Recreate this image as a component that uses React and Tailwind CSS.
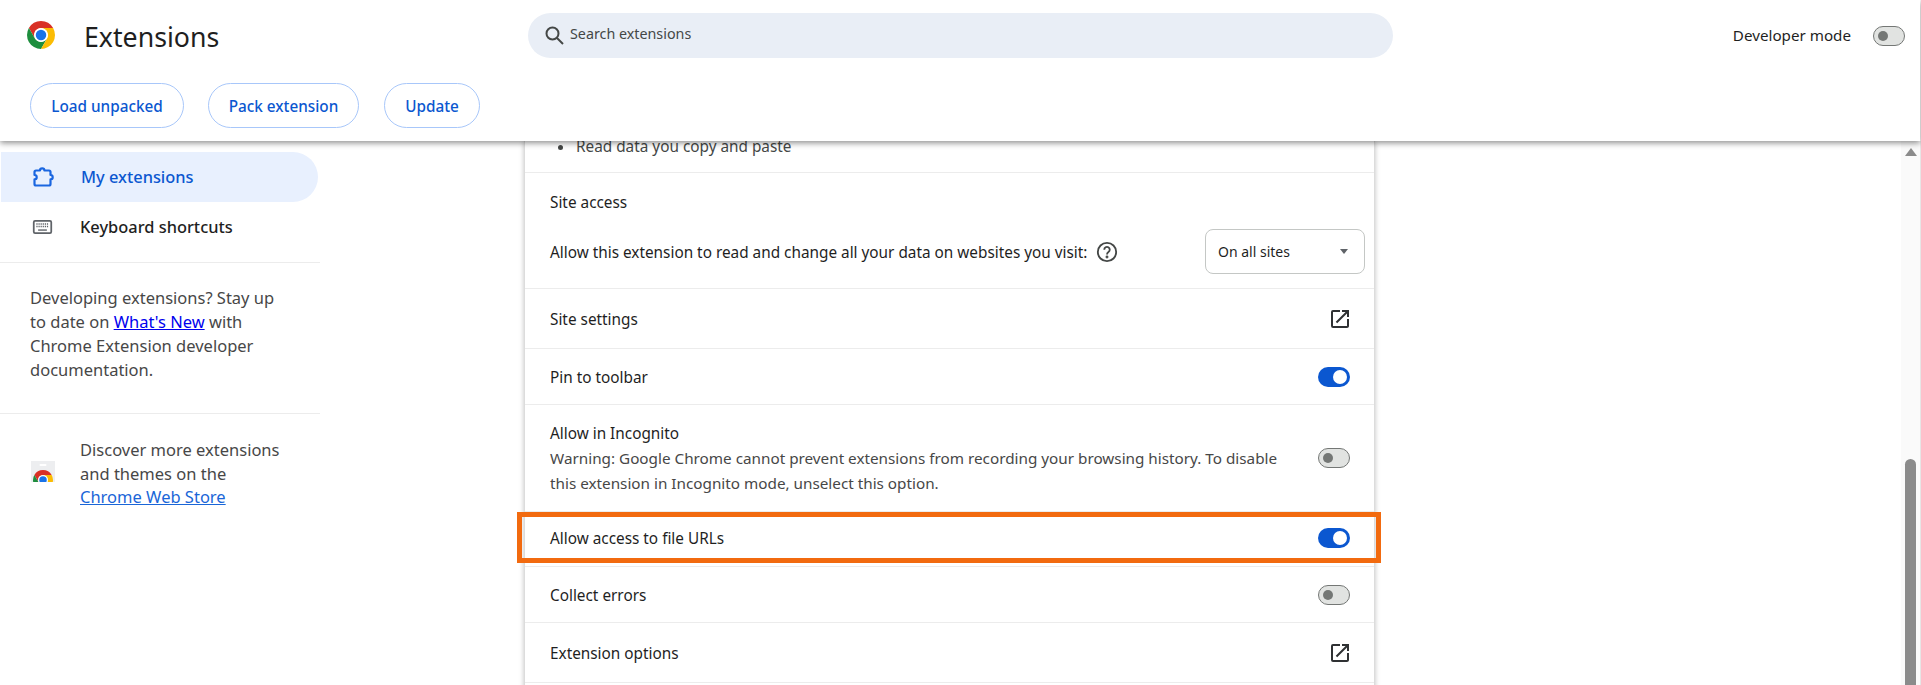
import React from "react";
import { MdOutlineOpenInNew } from "react-icons/md";

const font = "font-['Noto_Sans','Open_Sans',sans-serif]";

function ChromeLogo({ className }) {
  return (
    <svg viewBox="0 0 48 48" className={className}>
      <path fill="#d93025" d="M24 0A24 24 0 0 1 44.78 12H24A12 12 0 0 0 13.61 30L3.22 12A24 24 0 0 1 24 0Z" />
      <path fill="#1e8e3e" d="M3.22 12L13.61 30A12 12 0 0 0 34.39 30L24 48A24 24 0 0 1 3.22 12Z" />
      <path fill="#fbbc04" d="M44.78 12A24 24 0 0 1 24 48L34.39 30A12 12 0 0 0 24 12Z" />
      <circle cx="24" cy="24" r="11.5" fill="#fff" />
      <circle cx="24" cy="24" r="9" fill="#1a73e8" />
    </svg>
  );
}

function StoreIcon() {
  return (
    <svg viewBox="0 0 24 21" className="w-6 h-[21px] shrink-0">
      <rect width="24" height="21" fill="#edeef0" />
      <rect x="8.5" y="3" width="7" height="2" rx="1" fill="#fff" />
      <svg x="2" y="9" width="20" height="20" viewBox="0 0 48 48">
        <path fill="#d93025" d="M24 0A24 24 0 0 1 44.78 12H24A12 12 0 0 0 13.61 30L3.22 12A24 24 0 0 1 24 0Z" />
        <path fill="#1e8e3e" d="M3.22 12L13.61 30A12 12 0 0 0 34.39 30L24 48A24 24 0 0 1 3.22 12Z" />
        <path fill="#fbbc04" d="M44.78 12A24 24 0 0 1 24 48L34.39 30A12 12 0 0 0 24 12Z" />
        <circle cx="24" cy="24" r="11.5" fill="#fff" />
        <circle cx="24" cy="24" r="9" fill="#1a73e8" />
      </svg>
    </svg>
  );
}

function Toggle({ on }) {
  return on ? (
    <div className="w-8 h-5 rounded-full bg-[#0b57d0] flex items-center justify-end pr-[3px] shrink-0">
      <div className="w-[14px] h-[14px] rounded-full bg-white" />
    </div>
  ) : (
    <div className="w-8 h-5 rounded-full bg-[#e1e3e1] border border-[#747775] flex items-center pl-[4px] shrink-0">
      <div className="w-[10px] h-[10px] rounded-full bg-[#747775]" />
    </div>
  );
}

function Btn({ children, className }) {
  return (
    <div className={`h-[45px] pt-px rounded-full border border-[#a8c7fa] bg-white flex items-center justify-center text-[15.3px] font-medium text-[#0b57d0] ${className}`}>
      {children}
    </div>
  );
}

function Row({ children, className }) {
  return (
    <div className={`border-b border-[#ececec] pl-[25px] pr-[24px] flex items-center justify-between ${className}`}>
      {children}
    </div>
  );
}

function Ext() {
  return <MdOutlineOpenInNew className="text-[24px] text-[#2f3133] -mr-[2px]" />;
}

export default function App() {
  return (
    <div className={`w-full h-[685px] overflow-hidden flex flex-col bg-white ${font} text-[15.34px] text-[#444746]`}>
      <header className="relative z-20 h-[141px] shrink-0 bg-white shadow-[0_2px_6px_rgba(0,0,0,0.45)] mr-px">
        <div className="flex items-center h-[71px] pl-[27px] pr-[15px]">
          <ChromeLogo className="w-7 h-7 shrink-0 -mt-[1px]" />
          <h1 className="ml-[29px] w-[444px] text-[26.7px] text-[#1f1f1f] mt-[3px]">Extensions</h1>
          <div className="w-[865px] h-[45px] -mt-[1px] rounded-full bg-[#e9eef6] flex items-center pl-[14px] text-[14.3px] text-[#444746]">
            <svg viewBox="0 0 24 24" className="w-6 h-6 mr-[4px] shrink-0" fill="none" stroke="#444746" strokeWidth="2">
              <circle cx="10.5" cy="10.5" r="6" />
              <path d="M15 15l6 6" />
            </svg>
            <span className="-mt-[2px]">Search extensions</span>
          </div>
          <div className="flex-1" />
          <span className="text-[15.2px] text-[#1f1f1f] mr-[22px]">Developer mode</span>
          <Toggle />
        </div>
        <div className="flex pl-[30px] gap-6 mt-[12px]">
          <Btn className="w-[154px]">Load unpacked</Btn>
          <Btn className="w-[151px] mr-px">Pack extension</Btn>
          <Btn className="w-[96px]">Update</Btn>
        </div>
      </header>

      <div className="flex flex-1 min-h-0">
        <aside className="w-[320px] shrink-0 pt-[11px]">
          <div className="ml-px w-[317px] h-[50px] rounded-r-full bg-[#e8f0fe] flex items-center pl-[30px] text-[16.4px] font-medium text-[#0b57d0]">
            <svg viewBox="0 0 24 24" className="w-6 h-6 mr-[26px] shrink-0" fill="none" stroke="#1a66e0" strokeWidth="2.2" strokeLinejoin="round">
              <path d="M5 5.500H9a2.200 2.200 0 0 1 4.400 0H18A1.500 1.500 0 0 1 19.500 7v3a2.200 2.200 0 0 1 0 4.400V19a1.500 1.500 0 0 1-1.500 1.500H5A1.500 1.500 0 0 1 3.500 19v-4.600a2.200 2.200 0 0 0 0-4.400V7A1.500 1.500 0 0 1 5 5.500Z" />
            </svg>
            My extensions
          </div>
          <div className="h-[50px] flex items-center pl-[32px] text-[16.4px] font-medium text-[#1f1f1f]">
            <svg viewBox="0 0 22 16" className="w-[21px] h-[14px] mr-[27px] shrink-0">
              <rect x="1" y="1" width="20" height="14" rx="1.5" fill="#fff" stroke="#5f6368" strokeWidth="2" />
              <path d="M4 4.5h14M4 7.5h14" stroke="#5f6368" strokeWidth="1.6" strokeDasharray="1.4 1" />
              <path d="M6 11.5h10" stroke="#5f6368" strokeWidth="1.6" />
            </svg>
            Keyboard shortcuts
          </div>
          <div className="mt-[10px] border-t border-[#ececec] px-[30px] pt-[23px] pb-[31px] text-[16.5px] leading-[24px] text-[#474747]">
            Developing extensions? Stay up to date on <a className="underline text-[#0000ee]">What's New</a> with Chrome Extension developer documentation.
          </div>
          <div className="border-t border-[#ececec] pl-[31px] pr-[20px] pt-[24px] flex items-center text-[16.5px] leading-[23.5px] text-[#474747]">
            <div className="mr-[25px] pb-[3px] shrink-0"><StoreIcon /></div>
            <div>
              Discover more extensions and themes on the <a className="block underline text-[#1a66d8]">Chrome Web Store</a>
            </div>
          </div>
        </aside>

        <main className="w-[204px] shrink-0" />

        <section className="w-[851px] shrink-0 border-x border-[#dcdcdc] shadow-[0_0_5px_rgba(0,0,0,0.25)] flex flex-col h-[560px] bg-white relative z-10">
          <Row className="h-[32px] !justify-start !items-start text-[#444746]">
            <span className="w-[5px] h-[5px] rounded-full bg-[#444746] ml-[8px] mt-[4px] mr-[13px]" />
            <span className="-mt-[6px]">Read data you copy and paste</span>
          </Row>
          <div className="border-b border-[#ececec] h-[116px] pl-[25px] pr-[9px] flex flex-col">
            <div className="h-[24px] mt-[18px] flex items-center text-[#1f1f1f]">Site access</div>
            <div className="flex items-center justify-between mt-[14px]">
              <div className="flex items-center mt-[2px]">
                <span className="text-[#1f1f1f]">Allow this extension to read and change all your data on websites you visit:</span>
                <svg viewBox="0 0 24 24" className="w-[22px] h-[22px] ml-[9px]" fill="none" stroke="#444746" strokeWidth="2">
                  <circle cx="12" cy="12" r="10" />
                  <path d="M9 9.500a3 3 0 1 1 4.600 2.500c-1 .7-1.600 1.300-1.600 2.700" />
                  <circle cx="12" cy="17.500" r="0.600" fill="#444746" />
                </svg>
              </div>
              <div className="w-[160px] h-[45px] rounded-lg border border-[#c4c7c5] flex items-center justify-between pl-[12px] pr-[16px] text-[14px] text-[#1f1f1f]">
                On all sites
                <span className="w-0 h-0 border-x-[4px] border-x-transparent border-t-[5px] border-t-[#5f6368]" />
              </div>
            </div>
          </div>
          <Row className="h-[60px] text-[#1f1f1f]"><span className="mt-[2px]">Site settings</span><Ext /></Row>
          <Row className="h-[56px] text-[#1f1f1f]"><span className="mt-[2px]">Pin to toolbar</span><Toggle on /></Row>
          <Row className="h-[107px]">
            <div className="mt-[1px]">
              <div className="text-[#1f1f1f] leading-[25px]">Allow in Incognito</div>
              <div className="w-[745px] leading-[25px] text-[15.28px] text-[#474747]">Warning: Google Chrome cannot prevent extensions from recording your browsing history. To disable this extension in Incognito mode, unselect this option.</div>
            </div>
            <Toggle />
          </Row>
          <div className="relative -ml-[8px] -mr-[7px] border-[5px] border-[#f26a0f] h-[51px] shrink-0 pl-[28px] pr-[26px] flex items-center justify-between text-[#1f1f1f]">
            <span className="mt-[2px]">Allow access to file URLs</span>
            <Toggle on />
          </div>
          <Row className="h-[57px] text-[#1f1f1f] mt-[3px] border-t"><span className="mt-[2px]">Collect errors</span><Toggle /></Row>
          <Row className="h-[60px] text-[#1f1f1f]"><span className="mt-[2px]">Extension options</span><Ext /></Row>
        </section>

        <div className="flex-1" />
        <div className="w-[19px] shrink-0 bg-[#fafafa] flex flex-col items-center pt-[7px]">
          <span className="w-0 h-0 border-x-[6px] border-x-transparent border-b-[8px] border-b-[#8b8b8b]" />
          <div className="w-[11px] h-[240px] mt-[303px] rounded-t-md bg-[#8b8b8b]" />
        </div>
        <div className="w-px bg-[#e6e6e6] shrink-0" />
      </div>
    </div>
  );
}
